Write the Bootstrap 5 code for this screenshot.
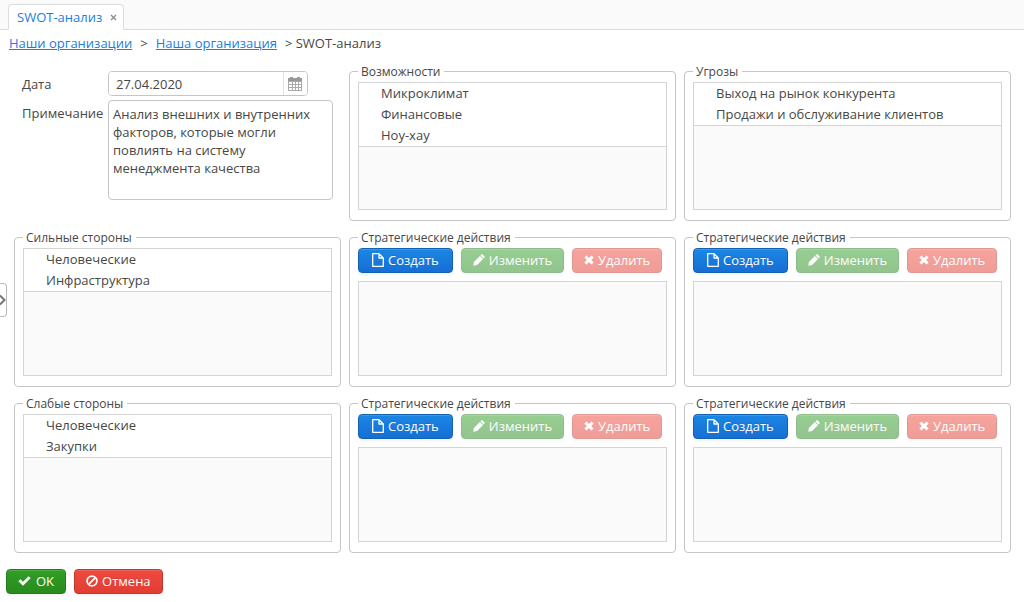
<!DOCTYPE html>
<html lang="ru">
<head>
<meta charset="utf-8">
<meta name="viewport" content="width=device-width, initial-scale=1">
<title>SWOT-анализ</title>
<link rel="stylesheet" href="https://cdn.jsdelivr.net/npm/bootstrap@5.3.0/dist/css/bootstrap.min.css">
<style>
  body { font-family: "Open Sans", "Noto Sans", sans-serif; font-size: 13px; line-height: 18px; color: #474747; background: #fff; }
  a { color: #197de1; }
  .tabbar { background: #fafafa; border-bottom: 1px solid #dcdcdc; padding: 4px 8px 0; }
  .tabbar .nav-link { display: flex; align-items: center; gap: 8px; padding: 3px 6px 3px 8px; line-height: 18px; color: #197de1; border: 1px solid #dcdcdc; border-bottom-color: #fff; border-radius: 4px 4px 0 0; background: #fff; margin-bottom: -1px; }
  .tab-close { border: 0; background: none; padding: 0; color: #888; line-height: 18px; display: flex; align-items: center; }
  .crumbs { padding: 4px 9px 0; gap: 8px; line-height: 18px; }
  .swot { padding: 11px 13px 0 14px; }
  .field-label { width: 86px; flex: none; padding-top: 4px; }
  .date-box { width: 200px; border: 1px solid #c5c5c5; border-radius: 4px; overflow: hidden; height: 25px; }
  .date-box input { border: 0; outline: 0; padding: 0 7px; min-width: 0; color: inherit; }
  .date-box button { border: 0; border-left: 1px solid #e2e2e2; background: #fff; width: 25px; padding: 0; display: flex; align-items: center; justify-content: center; }
  .note { height: 100px; border: 1px solid #c5c5c5; border-radius: 4px; padding: 4px; resize: none; color: inherit; outline: 0; overflow: hidden; }
  .entry { padding: 8px 8px 0; }
  .group { border: 1px solid #c5c5c5; border-radius: 4px; padding: 3px 8px 10px; }
  .group legend { float: none; width: auto; margin: 0; padding: 2px 4px 0 3px; font-size: 12px; line-height: 14px; }
  .listing { border: 1px solid #d4d4d4; background: #fafafa; min-height: 128px; }
  .listing.short { min-height: 95px; }
  .listing ul { background: #fff; border-bottom: 1px solid #d4d4d4; }
  .listing li { line-height: 21px; padding-left: 22px; }
  .act { display: inline-flex; align-items: center; gap: 4px; height: 25px; padding: 0 11px 1px; font-size: 13px; line-height: 18px; border-radius: 4px; color: #fff; white-space: nowrap; text-shadow: 0 -1px 0 rgba(0,0,0,.1); box-shadow: inset 0 1px 0 rgba(255,255,255,.15), 0 2px 3px rgba(0,0,0,.05); }
  .act, .act:hover, .act:disabled { color: #fff; }
  .act:disabled { opacity: .5; }
  .act-blue, .act-blue:hover { background: linear-gradient(#1b87e3, #166ed5); border-color: #1362b1; }
  .act-green, .act-green:hover, .act-green:disabled { background: linear-gradient(#2f9f26, #298b1e); border-color: #267a1c; }
  .act-red, .act-red:hover, .act-red:disabled { background: linear-gradient(#ef4a3e, #e13d33); border-color: #bb382e; }
  .toolbar-row { gap: 8px; margin-bottom: 8px; }
  .toolbar-row .act-blue { padding: 0 13px 1px; }
  .footer-row { gap: 8px; padding: 16px 6px 7px; }
  .footer-row .act-green { gap: 5px; }
  .drawer { top: 283px; width: 7px; height: 34px; padding: 0; border: 1px solid #b9b9b9; border-left: 0; border-radius: 0 4px 4px 0; background: #fff; display: flex; align-items: center; }
</style>
</head>
<body>
<svg class="d-none" xmlns="http://www.w3.org/2000/svg">
  <symbol id="i-file" viewBox="0 0 12 14"><path d="M1.500.7H7L11.300 5V13.300H.7V.7ZM7 .7V5H11.300" fill="none" stroke="currentColor" stroke-width="1.300" stroke-linejoin="round"/></symbol>
  <symbol id="i-pencil" viewBox="0 0 12 12"><path d="M.3 11.700.900 8 6.900 2 10 5.100 4 11.100ZM7.500 1.400 8.300.6Q9 0 9.700.6L11.400 2.300Q12 3 11.400 3.700L10.600 4.500Z" fill="currentColor"/></symbol>
  <symbol id="i-cross" viewBox="0 0 10 10"><path d="M2.500.4 5 2.900 7.500.4 9.600 2.500 7.100 5 9.600 7.500 7.500 9.600 5 7.100 2.500 9.600.4 7.500 2.900 5 .4 2.500Z" fill="currentColor"/></symbol>
  <symbol id="i-check" viewBox="0 0 13 10"><path d="M.4 5.200 2.400 3.200 5 5.800 10.600.3 12.600 2.300 5 9.800Z" fill="currentColor"/></symbol>
  <symbol id="i-ban" viewBox="0 0 12 12"><circle cx="6" cy="6" r="4.900" fill="none" stroke="currentColor" stroke-width="1.800"/><path d="M2.800 9.200 9.200 2.800" stroke="currentColor" stroke-width="1.800"/></symbol>
</svg>

<header class="tabbar">
  <ul class="nav">
    <li class="nav-item"><div class="nav-link"><a href="#" class="text-decoration-none">SWOT-анализ</a><button class="tab-close" type="button" aria-label="Закрыть"><svg width="7" height="7" viewBox="0 0 7 7"><path d="M1 1 6 6M6 1 1 6" stroke="currentColor" stroke-width="1.200"/></svg></button></div></li>
  </ul>
</header>

<nav class="crumbs d-flex">
  <a href="#">Наши организации</a><span>&gt;</span>
  <a href="#">Наша организация</a><span>&gt; SWOT-анализ</span>
</nav>

<button class="drawer position-absolute start-0" type="button" aria-label="Открыть панель"><svg width="6" height="12" viewBox="0 0 6 12"><path d="M0 1.500 4.500 6 0 10.500" fill="none" stroke="#777" stroke-width="2"/></svg></button>

<main class="swot">
  <div class="row g-2">
    <div class="col-4">
      <form class="entry d-flex flex-column gap-1">
        <div class="d-flex">
          <label class="field-label" for="date">Дата</label>
          <div class="date-box d-flex"><input id="date" class="flex-fill" type="text" value="27.04.2020"><button type="button" aria-label="Календарь"><svg width="14" height="14" viewBox="0 0 14 14"><path d="M0 2H14V14H0Z" fill="#aaa"/><path d="M0 1H14V4H0Z" fill="#999"/><path d="M2 0H5V3H2ZM9 0H12V3H9Z" fill="#999"/><path d="M1 5H4V7H1ZM5 5H7V7H5ZM8 5H10V7H8ZM11 5H13V7H11ZM1 8H4V10H1ZM5 8H7V10H5ZM8 8H10V10H8ZM11 8H13V10H11ZM1 11H4V13H1ZM5 11H7V13H5ZM8 11H10V13H8ZM11 11H13V13H11Z" fill="#fff"/></svg></button></div>
        </div>
        <div class="d-flex">
          <label class="field-label" for="note">Примечание</label>
          <textarea id="note" class="note flex-fill">Анализ внешних и внутренних факторов, которые могли повлиять на систему менеджмента качества</textarea>
        </div>
      </form>
    </div>
    <div class="col-4">
      <fieldset class="group"><legend>Возможности</legend>
        <div class="listing"><ul class="list-unstyled mb-0"><li>Микроклимат</li><li>Финансовые</li><li>Ноу-хау</li></ul></div>
      </fieldset>
    </div>
    <div class="col-4">
      <fieldset class="group"><legend>Угрозы</legend>
        <div class="listing"><ul class="list-unstyled mb-0"><li>Выход на рынок конкурента</li><li>Продажи и обслуживание клиентов</li></ul></div>
      </fieldset>
    </div>

    <div class="col-4">
      <fieldset class="group"><legend>Сильные стороны</legend>
        <div class="listing"><ul class="list-unstyled mb-0"><li>Человеческие</li><li>Инфраструктура</li></ul></div>
      </fieldset>
    </div>
    <div class="col-4">
      <fieldset class="group"><legend>Стратегические действия</legend>
        <div class="toolbar-row d-flex">
          <button type="button" class="btn act act-blue"><svg width="12" height="14"><use href="#i-file"/></svg>Создать</button>
          <button type="button" class="btn act act-green" disabled><svg width="12" height="12"><use href="#i-pencil"/></svg>Изменить</button>
          <button type="button" class="btn act act-red" disabled><svg width="10" height="10"><use href="#i-cross"/></svg>Удалить</button>
        </div>
        <div class="listing short"></div>
      </fieldset>
    </div>
    <div class="col-4">
      <fieldset class="group"><legend>Стратегические действия</legend>
        <div class="toolbar-row d-flex">
          <button type="button" class="btn act act-blue"><svg width="12" height="14"><use href="#i-file"/></svg>Создать</button>
          <button type="button" class="btn act act-green" disabled><svg width="12" height="12"><use href="#i-pencil"/></svg>Изменить</button>
          <button type="button" class="btn act act-red" disabled><svg width="10" height="10"><use href="#i-cross"/></svg>Удалить</button>
        </div>
        <div class="listing short"></div>
      </fieldset>
    </div>

    <div class="col-4">
      <fieldset class="group"><legend>Слабые стороны</legend>
        <div class="listing"><ul class="list-unstyled mb-0"><li>Человеческие</li><li>Закупки</li></ul></div>
      </fieldset>
    </div>
    <div class="col-4">
      <fieldset class="group"><legend>Стратегические действия</legend>
        <div class="toolbar-row d-flex">
          <button type="button" class="btn act act-blue"><svg width="12" height="14"><use href="#i-file"/></svg>Создать</button>
          <button type="button" class="btn act act-green" disabled><svg width="12" height="12"><use href="#i-pencil"/></svg>Изменить</button>
          <button type="button" class="btn act act-red" disabled><svg width="10" height="10"><use href="#i-cross"/></svg>Удалить</button>
        </div>
        <div class="listing short"></div>
      </fieldset>
    </div>
    <div class="col-4">
      <fieldset class="group"><legend>Стратегические действия</legend>
        <div class="toolbar-row d-flex">
          <button type="button" class="btn act act-blue"><svg width="12" height="14"><use href="#i-file"/></svg>Создать</button>
          <button type="button" class="btn act act-green" disabled><svg width="12" height="12"><use href="#i-pencil"/></svg>Изменить</button>
          <button type="button" class="btn act act-red" disabled><svg width="10" height="10"><use href="#i-cross"/></svg>Удалить</button>
        </div>
        <div class="listing short"></div>
      </fieldset>
    </div>
  </div>
</main>

<footer class="footer-row d-flex">
  <button type="button" class="btn act act-green"><svg width="13" height="10"><use href="#i-check"/></svg>OK</button>
  <button type="button" class="btn act act-red"><svg width="12" height="12"><use href="#i-ban"/></svg>Отмена</button>
</footer>
<script src="https://cdn.jsdelivr.net/npm/bootstrap@5.3.0/dist/js/bootstrap.bundle.min.js"></script>
</body>
</html>
